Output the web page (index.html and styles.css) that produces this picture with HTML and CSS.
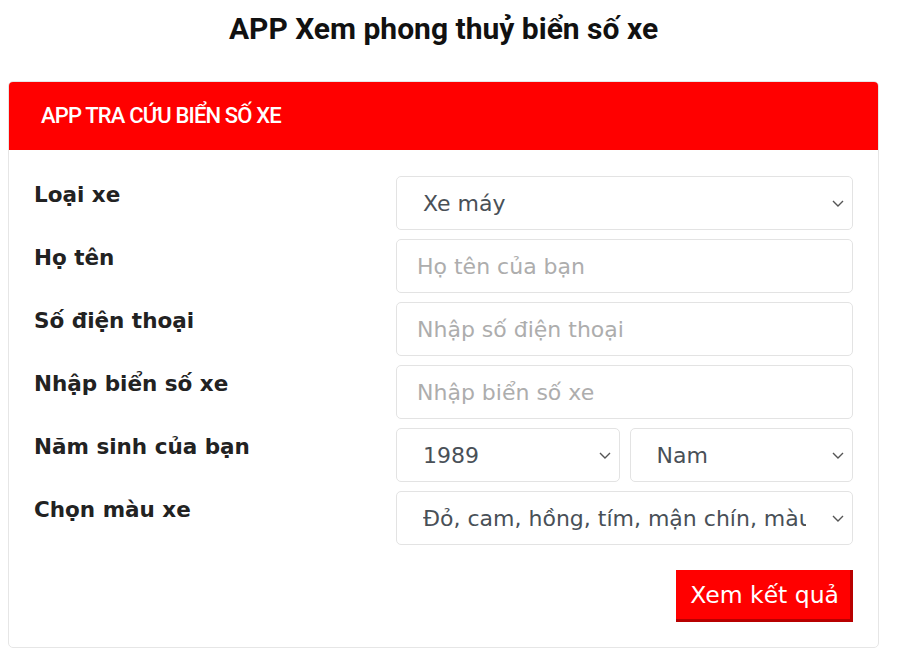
FILE: index.html
```html
<!DOCTYPE html>
<html lang="vi">
<head>
<meta charset="utf-8">
<title>APP Xem phong thuỷ biển số xe</title>
<link rel="stylesheet" href="styles.css">
</head>
<body>
<div class="page">
  <h1 class="title">APP Xem phong thuỷ biển số xe</h1>
  <div class="card">
    <div class="card-head">APP TRA CỨU BIỂN SỐ XE</div>
    <form class="card-body">
      <div class="row">
        <label class="label">Loại xe</label>
        <div class="select-wrap">
          <select class="control select"><option>Xe máy</option><option>Ô tô</option></select>
          <svg class="chev" viewBox="0 0 12 7" width="12" height="7"><path d="M1 1l5 5 5-5" fill="none" stroke="#555" stroke-width="1.4"/></svg>
        </div>
      </div>
      <div class="row">
        <label class="label">Họ tên</label>
        <input class="control input" type="text" placeholder="Họ tên của bạn">
      </div>
      <div class="row">
        <label class="label">Số điện thoại</label>
        <input class="control input" type="text" placeholder="Nhập số điện thoại">
      </div>
      <div class="row">
        <label class="label">Nhập biển số xe</label>
        <input class="control input" type="text" placeholder="Nhập biển số xe">
      </div>
      <div class="row">
        <label class="label">Năm sinh của bạn</label>
        <div class="pair">
          <div class="select-wrap">
            <select class="control select"><option>1989</option></select>
            <svg class="chev" viewBox="0 0 12 7" width="12" height="7"><path d="M1 1l5 5 5-5" fill="none" stroke="#555" stroke-width="1.4"/></svg>
          </div>
          <div class="select-wrap">
            <select class="control select"><option>Nam</option><option>Nữ</option></select>
            <svg class="chev" viewBox="0 0 12 7" width="12" height="7"><path d="M1 1l5 5 5-5" fill="none" stroke="#555" stroke-width="1.4"/></svg>
          </div>
        </div>
      </div>
      <div class="row">
        <label class="label">Chọn màu xe</label>
        <div class="select-wrap">
          <select class="control select"><option>Đỏ, cam, hồng, tím, mận chín, màu mận</option></select>
          <svg class="chev" viewBox="0 0 12 7" width="12" height="7"><path d="M1 1l5 5 5-5" fill="none" stroke="#555" stroke-width="1.4"/></svg>
        </div>
      </div>
      <div class="actions">
        <button type="button" class="btn">Xem kết quả</button>
      </div>
    </form>
  </div>
</div>
</body>
</html>
```
FILE: styles.css
```css
* { box-sizing: border-box; }
html, body { margin: 0; padding: 0; background: #fff; }
body { font-family: "DejaVu Sans", Verdana, sans-serif; color: #222; }

.page {
  width: 871px;
  margin-left: 8px;
}

.title {
  margin: 0;
  padding-top: 11px;
  height: 81px;
  text-align: center;
  font-family: Roboto, "Liberation Sans", sans-serif;
  font-weight: 700;
  font-size: 30px;
  line-height: 36px;
  letter-spacing: 0;
  color: #111;
}

.card {
  border: 1px solid #e6e6e6;
  border-radius: 5px;
  overflow: hidden;
}

.card-head {
  background: #ff0000;
  color: #fff;
  height: 69px;
  margin: -1px -1px 0;
  padding-left: 33px;
  display: flex;
  align-items: center;
  font-family: Roboto, "Liberation Sans", sans-serif;
  font-weight: 500;
  font-size: 22px;
  letter-spacing: -0.85px;
}

.card-body {
  padding: 26px 25px 25px 25px;
  display: flex;
  flex-direction: column;
  gap: 9px;
}

.row {
  display: grid;
  grid-template-columns: 362px 1fr;
  align-items: start;
}

.label {
  font-weight: 700;
  font-size: 21.5px;
  line-height: 28px;
  padding-top: 5px;
  color: #222;
}

.control {
  width: 100%;
  height: 54px;
  border: 1px solid #e3e3e3;
  border-radius: 5px;
  background: #fff;
  font-family: "DejaVu Sans", Verdana, sans-serif;
  font-size: 22px;
  color: #495057;
  outline: none;
  margin: 0;
}

.input { padding: 0 20px; }
.input::placeholder { color: #adadad; }

.select-wrap { position: relative; }

.select {
  appearance: none;
  -webkit-appearance: none;
  padding: 0 46px 0 26px;
}

.chev {
  position: absolute;
  right: 9px;
  top: 24px;
  pointer-events: none;
}

.pair {
  display: grid;
  grid-template-columns: 1fr 1fr;
  gap: 10px;
}

.actions {
  display: flex;
  justify-content: flex-end;
  padding-top: 16px;
}

.btn {
  height: 52px;
  padding: 0 11px 0 14px;
  background: #ff0000;
  color: #fff;
  border: none;
  border-right: 3px solid #b80000;
  border-bottom: 3px solid #b80000;
  font-family: "DejaVu Sans", Verdana, sans-serif;
  font-size: 23.5px;
  cursor: pointer;
}
```
